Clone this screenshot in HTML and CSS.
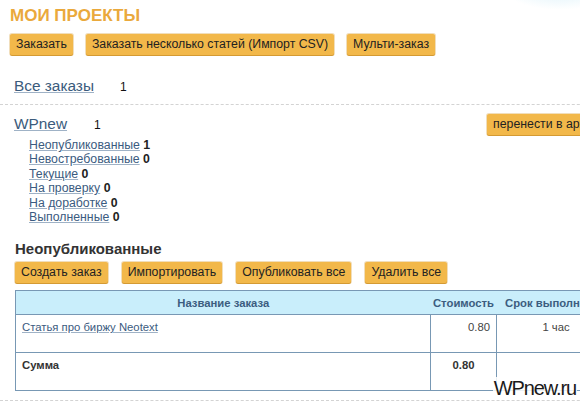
FILE: index.html
```html
<!DOCTYPE html>
<html lang="ru">
<head>
<meta charset="utf-8">
<title>Мои проекты</title>
<link rel="stylesheet" href="styles.css">
</head>
<body>
<div class="glow"></div>
<div class="page">
  <h1 class="title">Мои проекты</h1>
  <div class="btn-row">
    <span class="btn">Заказать</span>
    <span class="btn">Заказать несколько статей (Импорт CSV)</span>
    <span class="btn">Мульти-заказ</span>
  </div>

  <div class="all-orders">
    <a class="big-link" href="#">Все заказы</a><span class="count">1</span>
  </div>
  <div class="dashed"></div>

  <div class="project">
    <div class="project-head">
      <div><a class="big-link" href="#">WPnew</a><span class="count count-p">1</span></div>
      <span class="btn btn-archive">перенести в архив</span>
    </div>
    <ul class="status-list">
      <li><a href="#">Неопубликованные</a> <b>1</b></li>
      <li><a href="#">Невостребованные</a> <b>0</b></li>
      <li><a href="#">Текущие</a> <b>0</b></li>
      <li><a href="#">На проверку</a> <b>0</b></li>
      <li><a href="#">На доработке</a> <b>0</b></li>
      <li><a href="#">Выполненные</a> <b>0</b></li>
    </ul>

    <h2 class="section-title">Неопубликованные</h2>
    <div class="btn-row btn-row-2">
      <span class="btn">Создать заказ</span>
      <span class="btn">Импортировать</span>
      <span class="btn">Опубликовать все</span>
      <span class="btn">Удалить все</span>
    </div>

    <table class="orders">
      <thead>
        <tr><th class="c-name">Название заказа</th><th class="c-cost">Стоимость</th><th class="c-term">Срок выполнения</th></tr>
      </thead>
      <tbody>
        <tr><td class="c-name"><a href="#">Статья про биржу Neotext</a></td><td class="c-cost num">0.80</td><td class="c-term center">1 час</td></tr>
        <tr class="sum"><td class="c-name"><b>Сумма</b></td><td class="c-cost"><b>0.80</b></td><td class="c-term"></td></tr>
      </tbody>
    </table>
  </div>
  <div class="dashed dashed-bottom"></div>
</div>
<div class="watermark">WPnew.ru</div>
</body>
</html>
```

FILE: styles.css
```css
html, body {
  margin: 0;
  padding: 0;
  background: #fff;
  overflow: hidden;
}
body {
  width: 580px;
  height: 401px;
  position: relative;
  font-family: "Liberation Sans", Arial, sans-serif;
  color: #333;
}
.glow {
  position: absolute;
  right: -40px;
  top: -40px;
  width: 120px;
  height: 50px;
  border-radius: 50%;
  background: radial-gradient(ellipse at center, rgba(190,230,245,0.6), rgba(255,255,255,0) 70%);
}
.page {
  width: 640px;
  padding: 6px 0 0 10px;
}
.title {
  margin: 0;
  font-size: 17px;
  font-weight: bold;
  text-transform: uppercase;
  color: #eaa93c;
  line-height: 20px;
}
.btn-row {
  display: flex;
  gap: 13px;
  margin-top: 8px;
}
.btn {
  display: inline-block;
  background: #f2b84a;
  border-radius: 2px;
  box-shadow: 0 1px 0 #d49a33, 0 0 0 1px rgba(215,160,60,0.35);
  color: #222;
  font-size: 12.3px;
  line-height: 21px;
  padding: 0 6px;
  white-space: nowrap;
}
.all-orders {
  margin-top: 22px;
  padding-left: 4px;
  height: 20px;
}
.big-link {
  font-size: 15.4px;
  color: #3b5b7c;
  text-decoration: underline;
  text-decoration-color: #9fb2c6;
}
.count {
  font-size: 12px;
  color: #111;
  margin-left: 26px;
}
.count-p {
  margin-left: 27px;
}
.dashed {
  border-top: 1px dashed #d3d3d3;
  margin: 7px 0 0 -10px;
}
.project {
  padding-left: 4px;
}
.project-head {
  display: flex;
  justify-content: space-between;
  align-items: flex-start;
  margin-top: 10px;
  width: 591px;
}
.btn-archive {
  margin-top: -1px;
}
.status-list {
  list-style: none;
  margin: 3px 0 0;
  padding: 0 0 0 15px;
  font-size: 12.3px;
  line-height: 14.4px;
}
.status-list a {
  color: #3b5b80;
  text-decoration: underline;
  text-decoration-color: #9fb2c6;
}
.status-list b {
  color: #222;
}
.section-title {
  margin: 16px 0 0 1px;
  font-size: 15px;
  font-weight: bold;
  color: #333;
  line-height: 18px;
}
.btn-row-2 {
  margin-top: 4px;
  padding-left: 1px;
  gap: 14px;
}
.orders {
  margin: 7px 0 0 1px;
  border-collapse: collapse;
  font-size: 11.3px;
  border: 1px solid #7898b4;
}
.orders th {
  background: #c9eefb;
  color: #3c5d80;
  font-weight: bold;
  font-size: 11.3px;
  height: 23px;
  padding: 0;
  text-align: center;
  border-bottom: 1px solid #7898b4;
}
.orders td {
  vertical-align: top;
  padding: 6px 6px;
  height: 25px;
  border: 1px solid #7898b4;
  color: #444;
}
.c-name { width: 402px; }
.c-cost { width: 53px; }
.c-term { width: 106px; }
.orders td a {
  color: #3b5b80;
  text-decoration: underline;
  text-decoration-color: #9fb2c6;
}
.num { text-align: right; }
.center { text-align: center; }
.sum td { color: #333; }
.sum .c-cost { text-align: center; }
.dashed-bottom {
  margin-top: 9px;
}
.watermark {
  position: absolute;
  right: 3px;
  bottom: 2px;
  font-size: 20px;
  letter-spacing: -1.1px;
  color: #1a1a1a;
  background: rgba(255,255,255,0.85);
  padding: 0 1px;
  line-height: 22px;
}
```
